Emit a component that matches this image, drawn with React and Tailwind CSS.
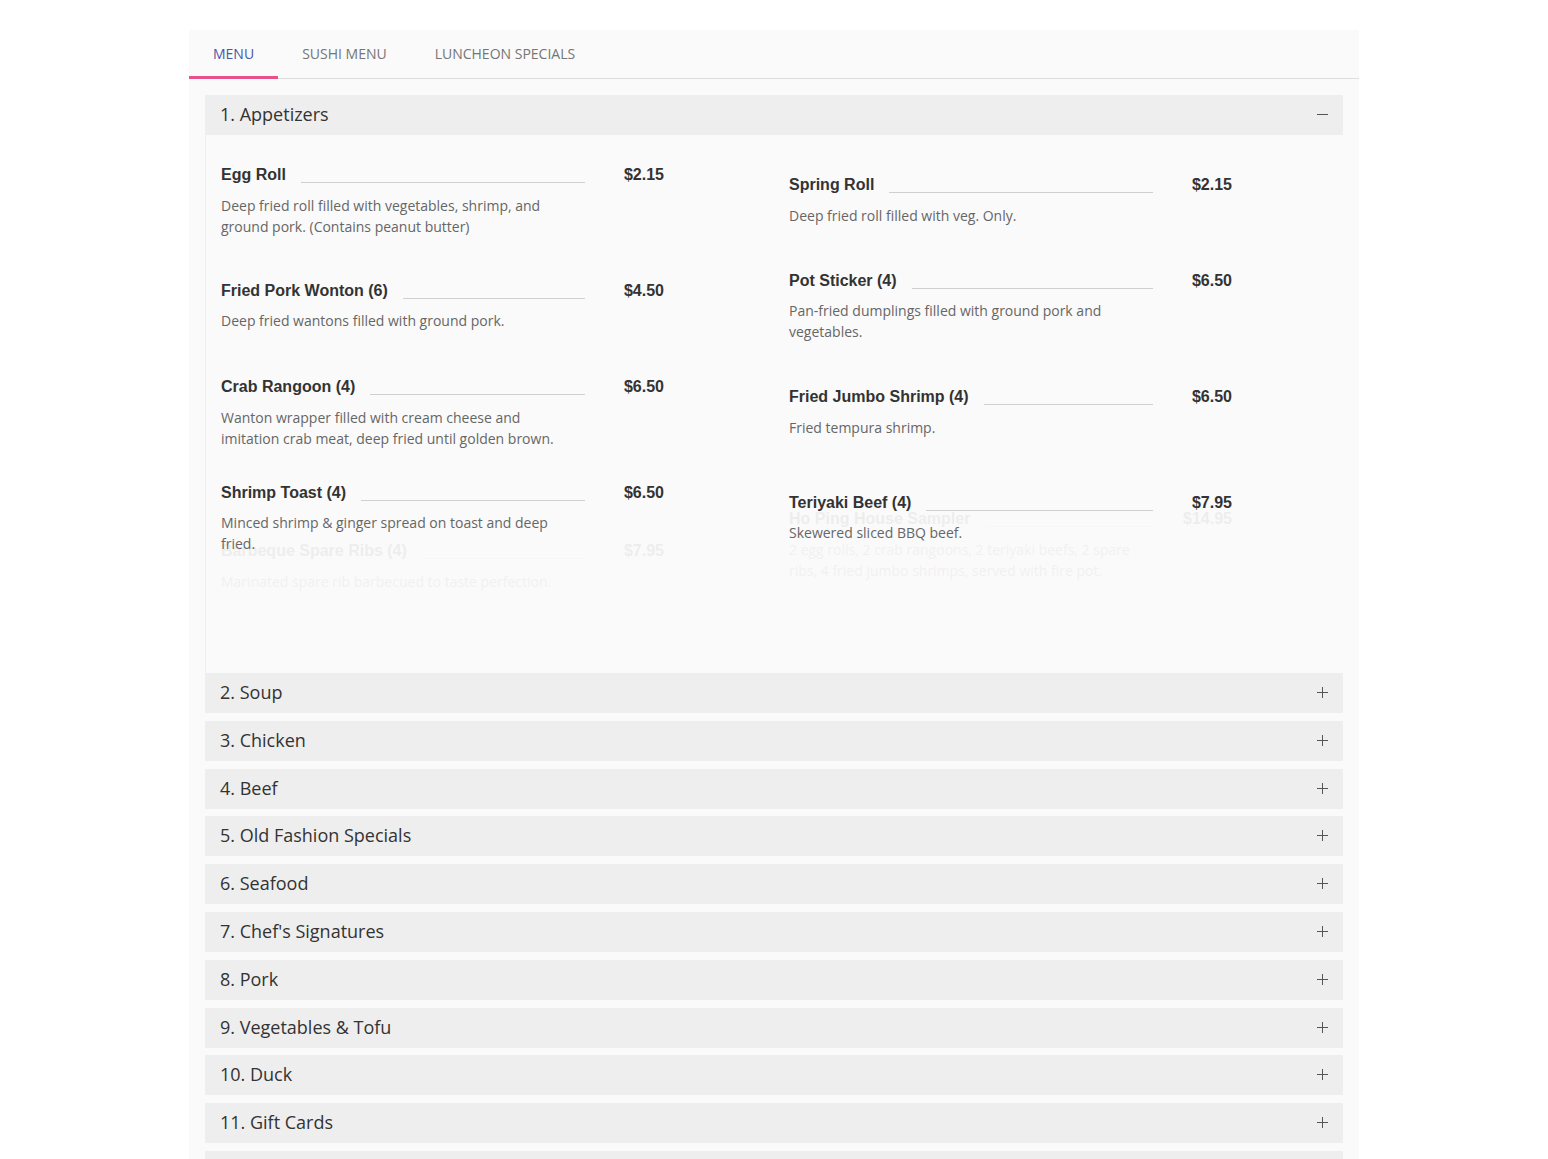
import React from 'react';

const left = [
  { name: 'Egg Roll', price: '$2.15', desc: 'Deep fried roll filled with vegetables, shrimp, and ground pork. (Contains peanut butter)', mb: 'mb-[43px]' },
  { name: 'Fried Pork Wonton (6)', price: '$4.50', desc: 'Deep fried wantons filled with ground pork.', mb: 'mb-[45px]' },
  { name: 'Crab Rangoon (4)', price: '$6.50', desc: 'Wanton wrapper filled with cream cheese and imitation crab meat, deep fried until golden brown.', mb: 'mb-[33px]' },
  { name: 'Shrimp Toast (4)', price: '$6.50', desc: 'Minced shrimp & ginger spread on toast and deep fried.', mb: 'mb-[44px]' },
];

const right = [
  { name: 'Spring Roll', price: '$2.15', desc: 'Deep fried roll filled with veg. Only.', mb: 'mb-[44px]' },
  { name: 'Pot Sticker (4)', price: '$6.50', desc: 'Pan-fried dumplings filled with ground pork and vegetables.', mb: 'mb-[44px]' },
  { name: 'Fried Jumbo Shrimp (4)', price: '$6.50', desc: 'Fried tempura shrimp.', mb: 'mb-[54px]' },
  { name: 'Teriyaki Beef (4)', price: '$7.95', desc: 'Skewered sliced BBQ beef.', mb: 'mb-[44px]' },
];

const sections = [
  '2. Soup',
  '3. Chicken',
  '4. Beef',
  '5. Old Fashion Specials',
  '6. Seafood',
  "7. Chef's Signatures",
  '8. Pork',
  '9. Vegetables & Tofu',
  '10. Duck',
  '11. Gift Cards',
  '12. Combination Platters',
];

// single menu entry: name ---- price, then description
const Item = ({ item, className = '' }) => (
  <div className={(item.mb || 'mb-[44px]') + ' ' + className}>
    <div className="flex h-[22px] items-center">
      <span className="font-['Liberation_Sans',Arial,sans-serif] text-[16px] font-bold text-[#333]">{item.name}</span>
      <span className="mb-[3px] ml-[15px] h-px flex-1 self-end bg-[#cfcfcf]"></span>
      <span className="w-[79px] text-right font-['Liberation_Sans',Arial,sans-serif] text-[16px] font-bold text-[#333]">{item.price}</span>
    </div>
    <p className="mt-[8.5px] w-[356px] text-[14px] leading-[21px] text-[#666]">{item.desc}</p>
  </div>
);

const Plus = () => (
  <svg width="11" height="11" viewBox="0 0 11 11" className="text-[#555]">
    <path d="M0 5.5h11M5.5 0v11" stroke="currentColor" strokeWidth="1" />
  </svg>
);

const Minus = () => (
  <svg width="11" height="11" viewBox="0 0 11 11" className="text-[#555]">
    <path d="M0 5.5h11" stroke="currentColor" strokeWidth="1" />
  </svg>
);

export default function App() {
  return (
    <div className="min-h-screen bg-white pt-[30px] font-['Open_Sans','Noto_Sans',sans-serif]">
      <div className="mx-auto w-[1170px] bg-[#fafafa] pb-2">
        {/* tabs */}
        <div className="flex h-[49px] border-b border-[#ddd] text-[14px]">
          <button className="-mb-px border-b-[3px] border-[#e8528a] px-6 uppercase text-[#4a56a6]">Menu</button>
          <button className="px-6 pb-[2px] uppercase text-[#757575]">Sushi Menu</button>
          <button className="px-6 pb-[2px] uppercase text-[#757575]">Luncheon Specials</button>
        </div>

        <div className="px-4 pt-4">
          {/* open section */}
          <div className="flex h-[40px] items-center justify-between bg-[#eeeeee] px-[15px] pb-px">
            <span className="text-[18px] text-[#333]">1. Appetizers</span>
            <Minus />
          </div>
          <div className="flex h-[538px] gap-[125px] border-l border-[#eee] bg-[#fafafa] pl-[15px] pt-[29px]">
            <div className="w-[443px]">
              {left.map((it) => (
                <Item key={it.name} item={it} />
              ))}
              <Item
                className="-mt-[58px] opacity-[0.06]"
                item={{ name: 'Barbeque Spare Ribs (4)', price: '$7.95', desc: 'Marinated spare rib barbecued to taste perfection.' }}
              />
            </div>
            <div className="w-[443px] pt-[10px]">
              {right.map((it) => (
                <Item key={it.name} item={it} />
              ))}
              <Item
                className="-mt-[79px] opacity-[0.06]"
                item={{ name: 'Ho Ping House Sampler', price: '$14.95', desc: '2 egg rolls, 2 crab rangoons, 2 teriyaki beefs, 2 spare ribs, 4 fried jumbo shrimps, served with fire pot.' }}
              />
            </div>
          </div>

          {/* collapsed sections */}
          <div className="flex flex-col gap-[7.8px]">
            {sections.map((s) => (
              <div key={s} className="flex h-[40px] items-center justify-between bg-[#eeeeee] px-[15px] pb-px">
                <span className="text-[18px] text-[#333]">{s}</span>
                <Plus />
              </div>
            ))}
          </div>
        </div>
      </div>
    </div>
  );
}
